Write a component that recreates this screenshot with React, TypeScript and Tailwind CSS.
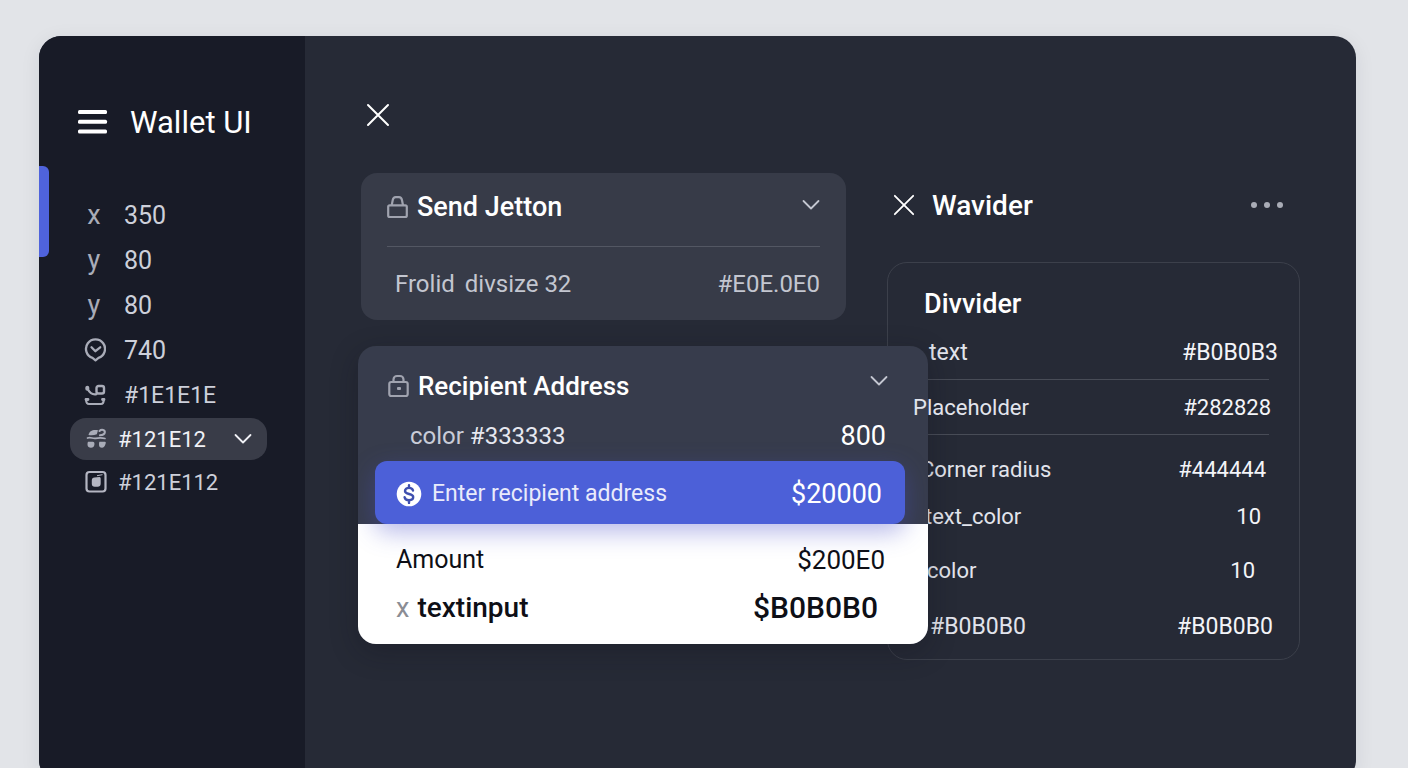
import { useState, type ReactNode } from 'react'
import clsx from 'clsx'

type SideItem = {
  icon: ReactNode
  label: string
  size: string
}

const sideItems: SideItem[] = [
  { icon: 'x', label: '350', size: 'text-[25px]' },
  { icon: 'y', label: '80', size: 'text-[25px]' },
  { icon: 'y', label: '80', size: 'text-[25px]' },
  { icon: <PinIcon />, label: '740', size: 'text-[25px]' },
  { icon: <TrayIcon />, label: '#1E1E1E', size: 'text-[23px]' },
]

const firstProps = [
  { name: 'text', value: '#B0B0B3', row: 'h-[51px] pb-0.5 pl-[41px] pr-[21px] text-[23px]' },
  { name: 'Placeholder', value: '#282828', row: 'h-[54px] pt-0.5 pl-[25px] pr-7 text-[22px]' },
]

const otherProps = [
  { name: 'Corner radius', value: '#444444', row: 'h-12 pl-8 pr-[33px] text-[22px]' },
  { name: 'text_color', value: '10', row: 'h-[46px] pl-[37px] pr-[38px] text-[22px]' },
  { name: 'color', value: '10', row: 'h-[62px] pl-[39px] pr-11 text-[22px]' },
  { name: '#B0B0B0', value: '#B0B0B0', row: 'h-[50px] pl-[42px] pr-[26px] text-[23px]' },
]

export default function App() {
  const [address, setAddress] = useState('')

  return (
    <div className="h-screen overflow-hidden bg-[#e2e4e8] pt-9 pr-[52px] pl-[39px] font-['Roboto',sans-serif]">
      <div className="relative flex h-[calc(100vh-22px)] overflow-hidden rounded-[22px] bg-[#262a36] shadow-[0_4px_20px_rgba(30,34,50,0.08)]">
        <Sidebar />

        <main className="min-w-0 flex-1 px-14 pt-16">
          <button aria-label="Close" className="mb-[43px] flex h-[30px] items-center pl-[5px] text-white">
            <CloseIcon className="size-6" />
          </button>

          <div className="grid grid-cols-[minmax(0,485fr)_minmax(0,413fr)] items-start gap-[41px]">
            <div>
              {/* Send card */}
              <section className="rounded-2xl bg-[#373b48] px-[26px]">
                <div className="mb-[5px] flex h-[68px] items-center gap-2">
                  <LockIcon />
                  <h2 className="flex-1 text-[27px] leading-8 font-medium text-white">Send Jetton</h2>
                  <button aria-label="Expand" className="pb-1 text-[#c3c6d0]">
                    <ChevronIcon />
                  </button>
                </div>
                <div className="h-px bg-[#535763]" />
                <div className="flex h-[73px] items-center justify-between pl-2 text-[24px] leading-8 text-[#c3c6d0]">
                  <p className="flex gap-2.5">
                    <span>Frolid</span>
                    <span>divsize 32</span>
                  </p>
                  <span>#E0E.0E0</span>
                </div>
              </section>

              {/* Recipient card, lies over the properties panel */}
              <section className="relative z-10 mt-[26px] -mr-[82px] -ml-[3px] overflow-hidden rounded-[18px] bg-[#373c4c] shadow-[0_8px_28px_rgba(16,18,28,0.3)]">
                <div className="pt-5">
                  <div className="flex h-10 items-center gap-2 pr-10 pl-[30px]">
                    <LockIcon keyhole />
                    <h2 className="flex-1 text-[26px] leading-8 font-medium text-white">Recipient Address</h2>
                    <button aria-label="Expand" className="flex h-[30px] items-center self-start text-[#c3c6d0]">
                      <ChevronIcon />
                    </button>
                  </div>
                  <div className="mt-2.5 flex h-10 items-center justify-between pr-[42px] pl-[52px]">
                    <p className="text-[24px] leading-8 text-[#c9ccd8]">
                      color <span className="text-[#e6e8f0]">#333333</span>
                    </p>
                    <span className="text-[27px] leading-8 text-white">800</span>
                  </div>
                  <div className="relative mt-[5px] mr-[23px] ml-[17px] flex h-[63px] items-center gap-2.5 rounded-xl bg-[#4c60d8] pt-0.5 pr-[23px] pl-[21px] text-white shadow-[0_8px_24px_rgba(76,80,200,0.4)]">
                    <CoinIcon />
                    <input
                      aria-label="Recipient address"
                      placeholder="Enter recipient address"
                      value={address}
                      onChange={(e) => setAddress(e.target.value)}
                      className="min-w-0 flex-1 bg-transparent text-[23px] leading-8 outline-none placeholder:text-[#e9ebfb]"
                    />
                    <span className="text-[27px] leading-8">$20000</span>
                  </div>
                </div>
                <div className="bg-white pt-3 pr-[43px] pb-3 pl-[38px] text-[#0e0f16]">
                  <div className="flex h-12 items-center justify-between leading-8">
                    <span className="text-[25px]">Amount</span>
                    <span className="text-[26px]">$200E0</span>
                  </div>
                  <div className="flex h-12 items-center gap-2 pr-[7px] leading-8 font-medium">
                    <button aria-label="Clear" className="text-[27px] font-normal text-[#8b8d94]">x</button>
                    <span className="flex-1 text-[28px]">textinput</span>
                    <span className="text-[30px]">$B0B0B0</span>
                  </div>
                </div>
              </section>
            </div>

            <aside>
              <div className="mb-[25px] flex h-16 items-center pr-[17px] pl-1.5 text-white">
                <button aria-label="Close panel">
                  <CloseIcon className="size-[22px]" />
                </button>
                <h2 className="flex-1 pt-0.5 pl-[17px] text-[28px] leading-8 font-medium">Wavider</h2>
                <button aria-label="More" className="flex gap-[7px]">
                  <span className="size-1.5 rounded-full bg-[#a9acb6]" />
                  <span className="size-1.5 rounded-full bg-[#a9acb6]" />
                  <span className="size-1.5 rounded-full bg-[#a9acb6]" />
                </button>
              </div>

              <section className="rounded-[20px] border border-[#3c404b] pt-4 pb-[7px]">
                <h3 className="flex h-[49px] items-center pl-9 text-[27px] leading-8 font-medium text-white">Divvider</h3>
                <dl>
                  {firstProps.map((prop) => (
                    <div key={prop.name}>
                      <PropRow {...prop} />
                      <div className="mr-[30px] ml-9 h-px bg-[#484c57]" />
                    </div>
                  ))}
                  <div className="pt-[11px]">
                    {otherProps.map((prop) => (
                      <PropRow key={prop.name} {...prop} />
                    ))}
                  </div>
                </dl>
              </section>
            </aside>
          </div>
        </main>
      </div>
    </div>
  )
}

function Sidebar() {
  return (
    <nav className="w-[266px] shrink-0 bg-[#181b27] pt-16 pr-[38px] pl-[31px]">
      <div className="absolute top-[130px] left-0 h-[91px] w-2.5 rounded-r-md bg-[#4f63dc]" />

      <div className="mb-12 flex h-11 items-center gap-[22px] pl-2 text-white">
        <button aria-label="Menu">
          <svg viewBox="0 0 30 24" className="h-6 w-[30px]" fill="currentColor">
            <rect x="0" y="0" width="29" height="4" rx="1.5" />
            <rect x="0" y="9.7" width="29" height="4" rx="1.5" />
            <rect x="0" y="19.4" width="29" height="4" rx="1.5" />
          </svg>
        </button>
        <h1 className="pt-0.5 text-[31px] leading-10 whitespace-nowrap">Wallet UI</h1>
      </div>

      <ul className="leading-8 text-[#cdd0da]">
        {sideItems.map((item, i) => (
          <li key={i} className={clsx('flex h-[45px] items-center gap-4 pl-3.5', item.size)}>
            <span className="flex w-6 justify-center pr-1 text-[27px] text-[#a9acb8]">{item.icon}</span>
            <span className="pt-0.5">{item.label}</span>
          </li>
        ))}
        <li className="pt-px">
          <button className="flex h-[42px] w-full items-center gap-2.5 rounded-2xl bg-[#393c48] pr-[15px] pl-3.5 text-left text-[22px] text-[#f0f1f6]">
            <span className="text-[#a9acb8]"><NodesIcon /></span>
            <span className="flex-1 pt-px">#121E12</span>
            <ChevronIcon />
          </button>
        </li>
        <li className="flex h-11 items-center gap-2.5 pl-3.5 text-[22px]">
          <span className="text-[#b4b6c2]"><FrameIcon /></span>
          <span className="pt-px">#121E112</span>
        </li>
      </ul>
    </nav>
  )
}

function PropRow({ name, value, row }: { name: string; value: string; row: string }) {
  return (
    <div className={clsx('flex items-center justify-between leading-8', row)}>
      <dt className={clsx('text-[#e2e4ec]', name === 'Placeholder' && 'relative z-20')}>{name}</dt>
      <dd className="text-[#f3f4f8]">{value}</dd>
    </div>
  )
}

function CloseIcon({ className }: { className: string }) {
  return (
    <svg viewBox="0 0 24 24" className={className} fill="none" stroke="currentColor" strokeWidth="2" strokeLinecap="round">
      <path d="M2 2l20 20M22 2L2 22" />
    </svg>
  )
}

function ChevronIcon() {
  return (
    <svg viewBox="0 0 18 18" className="size-[18px]" fill="none" stroke="currentColor" strokeWidth="1.8" strokeLinecap="round" strokeLinejoin="round">
      <path d="M1.5 5L9 12.5L16.5 5" />
    </svg>
  )
}

function LockIcon({ keyhole = false }: { keyhole?: boolean }) {
  return (
    <svg viewBox="0 0 22 24" className="h-6 w-[22px] shrink-0 text-[#a0a3af]" fill="none" stroke="currentColor" strokeWidth="2.2" strokeLinejoin="round">
      {keyhole ? (
        <>
          <rect x="1.3" y="8" width="18.4" height="14" rx="2" />
          <path d="M5.5 8V5.5A3.5 3.5 0 0 1 9 2h3a3.5 3.5 0 0 1 3.5 3.5V8" />
          <rect x="9" y="13" width="4" height="3" rx="1" fill="currentColor" stroke="none" />
        </>
      ) : (
        <>
          <rect x="1.2" y="10.3" width="18.6" height="11.7" rx="1.5" />
          <path d="M4.7 10.3l1-5.1c.4-2 1.3-3 3-3H12c1.700 0 2.600 1 3 3l1 5.100" />
        </>
      )}
    </svg>
  )
}

function CoinIcon() {
  return (
    <svg viewBox="0 0 26 26" className="size-[26px] shrink-0" fill="none">
      <circle cx="13" cy="13" r="12.3" fill="#fff" />
      <path
        d="M17 9.500C16.600 7.700 15 6.900 13 6.900c-2.300 0-4 1.100-4 3 0 4.200 8.200 2 8.200 6.200 0 2-1.800 3.100-4.200 3.100-2.300 0-4-1-4.400-3M13 4.200v2.700M13 19.200v2.700"
        stroke="#3f4fae"
        strokeWidth="2.4"
        strokeLinecap="round"
      />
    </svg>
  )
}

function PinIcon() {
  return (
    <svg viewBox="0 0 24 24" className="size-6 shrink-0" fill="none" stroke="currentColor" strokeWidth="2.3" strokeLinecap="round" strokeLinejoin="round">
      <path d="M13.5 22.3l-3-2.4A9.5 9.5 0 1 1 16.5 19.9Z" />
      <path d="M9.5 9.3l3.9 3.9 4.800-3.900" />
    </svg>
  )
}

function TrayIcon() {
  return (
    <svg viewBox="0 0 24 24" className="size-6 shrink-0" fill="none" stroke="currentColor" strokeWidth="2.2" strokeLinecap="round" strokeLinejoin="round">
      <rect x="14.5" y="3" width="7.5" height="7.5" rx="2" strokeWidth="2.4" />
      <path d="M5.3 4.800v1" strokeWidth="4" />
      <path d="M6 6.500c1.500 3 4 5.500 8.500 4.700" />
      <path d="M4 16.500c.2 3 .5 4.500 3 4.500h12c2.300 0 2.700-1.500 2.800-4.500" />
      <path d="M4 16.500h2M20.500 16.500h1.500" strokeWidth="2.8" />
    </svg>
  )
}

function NodesIcon() {
  return (
    <svg viewBox="0 0 24 24" className="size-6" fill="none" stroke="currentColor" strokeWidth="2" strokeLinecap="round">
      <path d="M4.500 8C5 4 9 2.200 14 3.200l-1.200 4C10 8.500 7 8.500 4.500 8z" fill="currentColor" stroke="none" />
      <path d="M15.500 4c2-2 5.700-1.300 5.300 1.500-.3 2-2.500 2.600-4.800 2.800" />
      <path d="M3.500 11c3-1.300 5 .8 8 .3s6-.8 9.500.2" strokeWidth="1.7" />
      <path d="M4.200 14.800h4.500c1.500 0 2 1 1.700 2.900-.3 2.100-1.400 3-3.400 3s-3.500-1-3.500-3c0-1.800.2-2.500.7-2.900zM15.500 14.800H21c.8 0 1 .7.6 2-.7 2.500-2 3.900-3.600 3.900-2 0-3-1.200-3-3 0-1.700.1-2.500.5-2.900z" fill="currentColor" stroke="none" />
    </svg>
  )
}

function FrameIcon() {
  return (
    <svg viewBox="0 0 24 24" className="size-6" fill="none" stroke="currentColor" strokeWidth="2.2" strokeLinejoin="round">
      <rect x="2.5" y="2" width="19" height="19.5" rx="3" />
      <path d="M7.800 10.500c0-2 1-3 2.700-3l5-.5c1 0 1.200 1 1.200 2v4.500c0 2.200-1.200 3.300-3 3.300h-3c-1.900 0-2.900-1.200-2.900-3z" fill="currentColor" stroke="none" />
      <path d="M13 5.700l5.500-1" strokeWidth="1" />
    </svg>
  )
}
